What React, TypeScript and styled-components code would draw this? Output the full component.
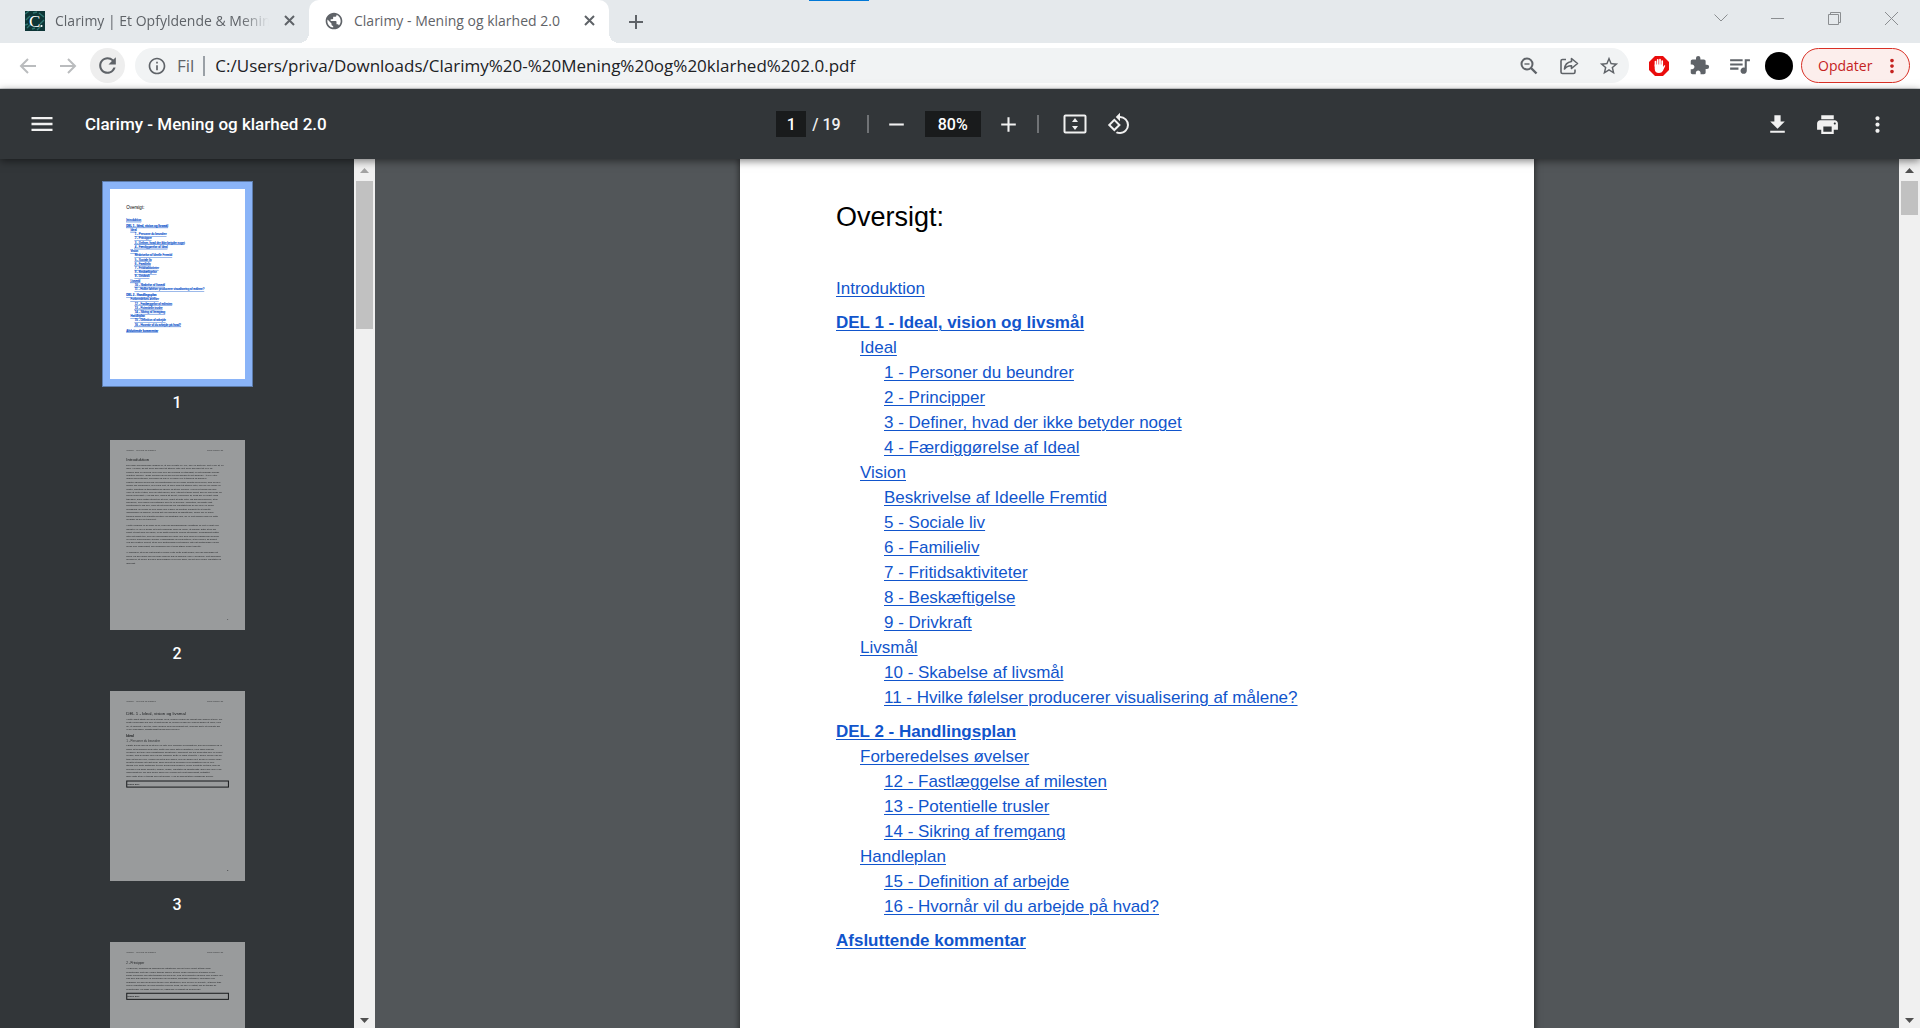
import React from "react";
import styled, { createGlobalStyle, css } from "styled-components";
import {
  MdAdd,
  MdExtension,
  MdMenu,
  MdMoreVert,
  MdOutlineInfo,
  MdPrint,
  MdPublic,
  MdQueueMusic,
  MdRefresh,
  MdRemove,
  MdRotate90DegreesCcw,
  MdStarBorder,
} from "react-icons/md";

const uiFont = `"Segoe UI", "Open Sans", "Noto Sans", sans-serif`;
const viewerFont = `Roboto, "Noto Sans", sans-serif`;
const pageFont = `"Liberation Sans", Arial, sans-serif`;

const GlobalStyle = createGlobalStyle`
  *, *::before, *::after { box-sizing: border-box; }
  body { margin: 0; overflow: hidden; }
  button, input { font: inherit; color: inherit; border: 0; padding: 0; margin: 0; background: none; outline: 0; }
  button { display: inline-flex; align-items: center; justify-content: center; flex: none; }
  svg { display: block; flex: none; }
`;

const Window = styled.div`
  height: 100vh;
  display: flex;
  flex-direction: column;
  font-family: ${uiFont};
  background: #fff;
`;

/* ---------- tab strip ---------- */

const TabStrip = styled.header`
  position: relative;
  display: flex;
  height: 43px;
  flex: none;
  background: #e5e9ec;
  color: #5f6368;
`;

const TaskMarker = styled.i`
  position: absolute;
  top: 0;
  left: 809px;
  width: 60px;
  height: 1px;
  background: #0078d7;
`;

const Tab = styled.div<{ $active?: boolean }>`
  position: relative;
  display: flex;
  align-items: center;
  gap: 10px;
  width: ${(p) => (p.$active ? 300 : 309)}px;
  padding: 0 10px 2px ${(p) => (p.$active ? 15 : 25)}px;
  font-size: 14px;
  line-height: 20px;
  ${(p) =>
    p.$active &&
    css`
      background: #fff;
      border-radius: 10px 10px 0 0;
      &::before,
      &::after {
        content: "";
        position: absolute;
        bottom: 0;
        width: 10px;
        height: 10px;
      }
      &::before {
        right: 100%;
        background: radial-gradient(circle at 0 0, transparent 10px, #fff 10px);
      }
      &::after {
        left: 100%;
        background: radial-gradient(circle at 100% 0, transparent 10px, #fff 10px);
      }
    `}
`;

const TabTitle = styled.span<{ $fade?: boolean }>`
  flex: 1;
  min-width: 0;
  overflow: hidden;
  white-space: nowrap;
  ${(p) =>
    p.$fade &&
    css`
      mask-image: linear-gradient(90deg, #000 calc(100% - 28px), transparent);
    `}
`;

const TabClose = styled.button`
  width: 20px;
  height: 20px;
`;

const NewTab = styled.button`
  width: 34px;
  margin-left: 10px;
`;

const WindowControls = styled.div`
  display: flex;
  margin-left: auto;
  height: 36px;
  color: #8b8e91;
`;

const WindowButton = styled.button`
  width: 57px;
`;

/* ---------- address row ---------- */

const AddressRow = styled.div`
  display: flex;
  align-items: center;
  gap: 10px;
  height: 46px;
  flex: none;
  padding: 0 10px;
  border-bottom: 1px solid #d5d7d9;
  color: #5f6368;
`;

const NavButtons = styled.div`
  display: flex;
  gap: 5px;
`;

const ToolRow = styled.div`
  display: flex;
  align-items: center;
`;

const NavButton = styled.button<{ $round?: boolean; $faded?: boolean }>`
  width: 35px;
  height: 35px;
  border-radius: 50%;
  background: ${(p) => (p.$round ? "#eeeeee" : "transparent")};
  color: ${(p) => (p.$faded ? "#babcbe" : "#5f6368")};
`;

const AddressBar = styled.form`
  display: flex;
  align-items: center;
  flex: 1;
  min-width: 0;
  height: 35px;
  padding: 0 0 0 12px;
  border-radius: 18px;
  background: #f1f3f4;
  font-size: 17px;
`;

const Scheme = styled.span`
  margin-left: 10px;
  padding-right: 9px;
  border-right: 2px solid #9aa0a6;
  line-height: 20px;
`;

const UrlInput = styled.input`
  flex: 1;
  min-width: 0;
  margin-left: 10px;
  color: #202124;
`;

const IconButton = styled.button`
  width: 40px;
  height: 35px;
`;

const Avatar = styled.button`
  width: 28px;
  height: 28px;
  margin: 0 8px 0 6px;
  border-radius: 50%;
  background: #000;
`;

const UpdateButton = styled.button`
  width: 109px;
  height: 35px;
  padding: 0 6px 0 16px;
  justify-content: space-between;
  border: 1px solid #d93025;
  border-radius: 18px;
  background: #fceeec;
  color: #c5221f;
  font-size: 14px;
`;

/* ---------- viewer toolbar ---------- */

const ViewerBar = styled.div`
  position: relative;
  z-index: 1;
  display: grid;
  grid-template-columns: 1fr auto 1fr;
  align-items: center;
  height: 70px;
  flex: none;
  padding: 0 23px 0 22px;
  background: #323639;
  color: #f1f1f1;
  font-family: ${viewerFont};
  font-size: 17px;
  font-weight: 500;
  box-shadow: 0 2px 8px rgba(0, 0, 0, 0.5);
`;

const BarGroup = styled.div<{ $gap: number; $end?: boolean }>`
  display: flex;
  align-items: center;
  gap: ${(p) => p.$gap}px;
  justify-content: ${(p) => (p.$end ? "flex-end" : "flex-start")};
`;

const ViewerButton = styled.button`
  width: 40px;
  height: 40px;
`;

const DocTitle = styled.h1`
  margin: 0;
  font-size: 17px;
  font-weight: 500;
  color: #fff;
`;

const BarInput = styled.input<{ $width: number }>`
  width: ${(p) => p.$width}px;
  height: 26px;
  background: #191b1c;
  color: #fff;
  font-size: 16px;
  text-align: center;
`;

const PageCount = styled.span`
  margin-right: 18px;
  font-size: 16px;
  white-space: pre;
`;

const Separator = styled.i`
  width: 2px;
  height: 18px;
  background: #707376;
`;

const FitTools = styled.div`
  display: flex;
  gap: 4px;
  margin: 0 4px 0 8px;
`;

/* ---------- viewer body ---------- */

const ViewerBody = styled.div`
  display: flex;
  flex: 1;
  min-height: 0;
`;

const Sidebar = styled.aside`
  display: flex;
  flex-direction: column;
  align-items: center;
  width: 354px;
  flex: none;
  padding-top: 30px;
  overflow: hidden;
  background: #323639;
`;

const ThumbItem = styled.button`
  flex-direction: column;
  justify-content: flex-start;
  gap: 11px;
  height: 251px;
  color: #fff;
  font-family: ${viewerFont};
  font-size: 16px;
  font-weight: 500;
  line-height: 26px;
`;

const ThumbPage = styled.div<{ $selected: boolean }>`
  width: 135px;
  height: 190px;
  background: #fff;
  ${(p) =>
    p.$selected
      ? css`
          outline: 1px solid #5d7cab;
          outline-offset: 7px;
          box-shadow: 0 0 0 8px #8ab4f8;
        `
      : css`
          opacity: 0.5;
        `}
`;

const Track = styled.div`
  display: flex;
  flex-direction: column;
  align-items: center;
  width: 21px;
  flex: none;
  background: #f0f0f0;
`;

const TrackArrow = styled.button<{ $down?: boolean; $muted?: boolean }>`
  width: 21px;
  height: ${(p) => (p.$down ? 16 : 22)}px;
  margin-top: ${(p) => (p.$down ? "auto" : 0)};
  color: ${(p) => (p.$muted ? "#a3a3a3" : "#505050")};
`;

const TrackThumb = styled.div<{ $height: number }>`
  width: 17px;
  height: ${(p) => p.$height}px;
  background: #c1c1c1;
`;

const Canvas = styled.main`
  display: flex;
  justify-content: center;
  align-items: flex-start;
  flex: 1;
  min-width: 0;
  overflow: hidden;
  background: #525659;
`;

const Sheet = styled.article`
  width: 794px;
  min-height: 1123px;
  padding: 40px 96px;
  background: #fff;
  font-family: ${pageFont};
  box-shadow: 0 0 6px 1px rgba(0, 0, 0, 0.5);
`;

const SheetTitle = styled.h2`
  margin: 0 0 41px;
  font-size: 27px;
  font-weight: 400;
  line-height: 36px;
  color: #000;
`;

const Contents = styled.nav`
  display: flex;
  flex-direction: column;
  align-items: flex-start;
`;

const Entry = styled.a<{ $level: number; $bold?: boolean }>`
  margin-left: ${(p) => p.$level * 24}px;
  margin-top: ${(p) => (p.$bold ? 9 : 0)}px;
  font-size: 17px;
  font-weight: ${(p) => (p.$bold ? 700 : 400)};
  line-height: 25px;
  color: #1155cc;
  text-decoration: underline;
  text-decoration-thickness: 1px;
  text-underline-offset: 2px;
  white-space: nowrap;
`;

type EntryData = { text: string; level: number; bold?: boolean };

const entries: EntryData[] = [
  { text: "Introduktion", level: 0 },
  { text: "DEL 1 - Ideal, vision og livsmål", level: 0, bold: true },
  { text: "Ideal", level: 1 },
  { text: "1 - Personer du beundrer", level: 2 },
  { text: "2 - Principper", level: 2 },
  { text: "3 - Definer, hvad der ikke betyder noget", level: 2 },
  { text: "4 - Færdiggørelse af Ideal", level: 2 },
  { text: "Vision", level: 1 },
  { text: "Beskrivelse af Ideelle Fremtid", level: 2 },
  { text: "5 - Sociale liv", level: 2 },
  { text: "6 - Familieliv", level: 2 },
  { text: "7 - Fritidsaktiviteter", level: 2 },
  { text: "8 - Beskæftigelse", level: 2 },
  { text: "9 - Drivkraft", level: 2 },
  { text: "Livsmål", level: 1 },
  { text: "10 - Skabelse af livsmål", level: 2 },
  { text: "11 - Hvilke følelser producerer visualisering af målene?", level: 2 },
  { text: "DEL 2 - Handlingsplan", level: 0, bold: true },
  { text: "Forberedelses øvelser", level: 1 },
  { text: "12 - Fastlæggelse af milesten", level: 2 },
  { text: "13 - Potentielle trusler", level: 2 },
  { text: "14 - Sikring af fremgang", level: 2 },
  { text: "Handleplan", level: 1 },
  { text: "15 - Definition af arbejde", level: 2 },
  { text: "16 - Hvornår vil du arbejde på hvad?", level: 2 },
  { text: "Afsluttende kommentar", level: 0, bold: true },
];

/* ---------- page miniatures, drawn in page units (794 x 1123) ---------- */

const Miniature = ({ children }: { children: React.ReactNode }) => (
  <svg width="135" height="190" viewBox="0 0 794 1123" fontFamily={pageFont} fontSize="14" aria-hidden="true">
    {children}
  </svg>
);

const MiniLines = ({ y, lines }: { y: number; lines: string[] }) => (
  <>
    {lines.map((line, i) => (
      <text key={i} x="94" y={y + i * 20}>
        {line}
      </text>
    ))}
  </>
);

const MiniHeader = () => (
  <g fill="#444">
    <text x="94" y="64">Clarimy - Mening og klarhed</text>
    <text x="572" y="64">www.clarimy.dk</text>
  </g>
);

const MiniField = ({ y }: { y: number }) => (
  <>
    <rect x="97" y={y} width="601" height="36" fill="none" stroke="#000" strokeWidth="6" />
    <text x="102" y={y + 24} fontWeight="700">[Skriv her]</text>
  </>
);

const MiniContents = () => {
  let y = 136;
  return (
    <Miniature>
      <text x="94" y="120" fontSize="27">Oversigt:</text>
      <g fill="#1155cc" stroke="#1155cc" strokeWidth="1" fontSize="17" textDecoration="underline">
        {entries.map((e, i) => {
          y += i === 0 ? 52 : e.bold ? 35 : 25;
          return (
            <text key={e.text} x={94 + e.level * 25} y={y} fontWeight={e.bold ? 700 : 400}>
              {e.text}
            </text>
          );
        })}
      </g>
    </Miniature>
  );
};

const MiniIntroduction = () => (
  <Miniature>
    <MiniHeader />
    <text x="94" y="123" fontSize="26">Introduktion</text>
    <MiniLines
      y={153}
      lines={[
        "Den indre menneskelige mission er, at hver eneste er i live, ikke en goft rolle. Det er for at, en",
        "gave i verden, da det giver dig noget at stræbe efter. Det giver dig noget at leve og",
        "fungere som en mening. Men hvor ikke din hverdag er retfærdigt, er det forårsage mange",
        "negative følelser. I søde mening og mål har og kan sælges til det ønskede. At leve efter",
        "andres forventninger, meninger og mål er en sikker vej til tomhed og sjælden.",
        "Positive følelser genereres ved forestillingen om en bedre fremtid og hverves, som du selv",
        "skaber din progressive, hen imod. Det, at have noget at stræbe efter, kan og ville skabe en",
        "positiv, ambitiøs og tilfredsstillende følelse og styrke mening. Hvis hver tilfreds har dine",
        "være at nå til et sted, hvor du intet savner, hvor i stedet at finde noget, som er fornyende og",
        "fokus mennesket i, ved dig selv, planes alt selvet, opfyldelse af, hvad der er meget værd",
        "tilfredsen, sand vigtige stedet for at hver, noget at sigte efter. Og grænserefleksen, at de",
        "følelserne, hvor højere forventninger blive til en selvmin i projektion, så skabte højt",
        "forestillinger til dig selv, uden at betyning dig om resultatet kan du for være en sikker",
        "heldsgang. Du opnår på den måde den fysiske og mentale kapacitet til at udnytte",
        "udfordringer og arbejde, nemlig det vise følelsels og afsluttende, midler der er hjælp",
        "træning derfor til til at sætte sig store og ambitiøse mål, du vil. Det gælder både for dette",
        "program og for livet generelt.",
      ]}
    />
    <MiniLines
      y={511}
      lines={[
        "I dette program vil du finde ud af, hvad din grundlæggende opfattelse af livet er godt eller",
        "dårligt liv er. Du vil skabe dit eget personlige ideal og vision, at forfølge. Efter at du har",
        "klaret et klart ideal og vision, vil du sætte konkrete livsmål at forfølge. Programmet slutter",
        "efter det sidste trin, hvor der planlægges der måle. Der skal laves en handleplan gennem",
        "en række forberedende øvelser. Planmæssige der respekterer, at du opnuer, så sikkert",
        "ved den positive hvilket, at du ikke gentænnager det samme efter. Et gentænnage mener",
        "derfor ikke nødvendigt, men anbefales for et opnå større meget udbytte.",
      ]}
    />
    <MiniLines
      y={670}
      lines={[
        "Vi anbefaler, at du så vidt muligt vil kunne ryste dette forstyrrelser, der kan ødelægge dit",
        "fokus. På den måde kan du bedre forbyde dig og drømme være i øvelserne. Det anbefales",
        "derudover, at kunne øvelsen gennemføres over flere dage, da det giver bedre resultater på",
        "lang sigt.",
      ]}
    />
    <text x="690" y="1064">1</text>
  </Miniature>
);

const MiniPartOne = () => (
  <Miniature>
    <MiniHeader />
    <text x="94" y="141" fontSize="26">DEL 1 - Ideal, vision og livsmål</text>
    <MiniLines
      y={171}
      lines={[
        "I dette afsnit starter du med at finde ud af, hvilken person du inderst inde ønsker at blive. De",
        "fleste mennesker har ikke et klart billede af, hvilken person de virkelig ønsker at være, men",
        "du, et eksplicit. I den tro, som værd for dem og beskæft det, virkende dig til et perfekte dig",
        "vil du virkelighed, fuldstændigt tilfreds med dig selv.",
      ]}
    />
    <text x="94" y="273" fontSize="20" fontWeight="700">Ideal</text>
    <text x="94" y="302" fontSize="18" fill="#333">1 - Personer du beundrer</text>
    <MiniLines
      y={326}
      lines={[
        "Første øvelse går ud på at lave en liste over personer og karakterer, som du beundrer og vil",
        "forme dit personlige ideal efter. Dette kan være fiktive karakterer, men også virkelige",
        "personer. Det kan være forhistoriske kendt som i nærværet. Du har formentlig ikke én enkelt",
        "person, som du finder ideel på alle områder. Dette er også et facit til. I denne øvelse kan du",
        "tage lidt fra den ene, person og lidt af den anden, hvis du ønsker det. Derfor vi senere finde",
        "brugt til at skabe dit eget ideal. Skriv navnet på personen eller karakteren og en eller",
        "stikord eller korte sætninger til hver. Derfor skal beskrive, hvilke kvaliteter og træk, som du",
        "beundrer ved disse karakter, person, image, resultater og karakteristik. Skriv ikke mere end",
        "nødvendigt her. Du skal kunne skrive frie overfor det mest nødvendigt, kortfattet.",
        "Skriv indtil at du er tilfreds med dit arbejde. Hvis du brændt stiller nådigende senere.",
      ]}
    />
    <MiniField y={532} />
    <text x="690" y="1064">2</text>
  </Miniature>
);

const MiniPrinciples = () => (
  <Miniature>
    <MiniHeader />
    <text x="94" y="131" fontSize="18">2 - Principper</text>
    <MiniLines
      y={161}
      lines={[
        "I prøvende, filosofisk og udfordrende situationer kan det være svært at tage gode",
        "beslutninger. Det kan i nogle tilfælde hjælpe at have nogle principper at handle ud fra.",
        "Disse principper kan altid tilpasses og laves om, hvis dit perspektiv udvikles eller ændrer. Du",
        "kan dele dig inspirere af mennesker du beundrer, filosofiske retninger, ideologier eller",
        "spørgsler. Du kan med fordel tænke over situationer, hvor du selv er havnet i, at skulle tage",
        "svære beslutninger. Du kan derefter overveje hvad, du ikke er vigtigt, når du træffer de",
        "beslutninger. Ud disse principper er, passende overskrift og beskrivelse.",
      ]}
    />
    <MiniField y={303} />
  </Miniature>
);

const thumbs = [MiniContents, MiniIntroduction, MiniPartOne, MiniPrinciples];

/* ---------- icons ---------- */

const Favicon = () => (
  <svg width="20" height="20" viewBox="0 0 20 20" aria-hidden="true">
    <rect width="20" height="20" fill="#0d3536" />
    <path d="M0 3l4-3M1 9l4-4M14 2l5 4M2 17l4-4M15 13l4-4M12 19l5-5M8 2l4-1M0 14l3-1M7 18l3-1" stroke="#2f7470" strokeWidth="1.4" />
    <text x="4" y="16" fontFamily="Liberation Serif, serif" fontSize="17" fill="#fff">C</text>
    <circle cx="16.500" cy="15" r="1" fill="#fff" />
  </svg>
);

const CloseGlyph = () => (
  <svg width="11" height="11" viewBox="0 0 11 11" stroke="#5f6368" strokeWidth="2">
    <path d="M1 1l9 9M10 1L1 10" />
  </svg>
);

const ArrowGlyph = ({ flip }: { flip?: boolean }) => (
  <svg width="18" height="18" viewBox="0 0 18 18" fill="none" stroke="currentColor" strokeWidth="2">
    <path d={flip ? "M1 9h15M9 2l7 7-7 7" : "M17 9H2M9 2L2 9l7 7"} />
  </svg>
);

const ZoomOutGlyph = () => (
  <svg width="18" height="18" viewBox="0 0 18 18" fill="none" stroke="#5f6368">
    <circle cx="7" cy="7" r="5.500" strokeWidth="2" />
    <path d="M11 11l5.500 5.500" strokeWidth="2.400" />
    <path d="M4.500 7h5" strokeWidth="1.400" />
  </svg>
);

const ShareGlyph = () => (
  <svg width="20" height="18" viewBox="0 0 20 18" fill="none" stroke="#5f6368" strokeWidth="1.600" strokeLinejoin="round">
    <path d="M7 2.500H3.500Q2 2.500 2 4v11Q2 16.500 3.500 16.500h11Q16 16.500 16 15v-2.500" />
    <path d="M12.500 1.500L18.500 6.500l-6 5V8.700Q8 8.500 5.500 12 6 5.500 12.500 4.500z" />
  </svg>
);

const BlockerGlyph = () => (
  <svg width="22" height="22" viewBox="0 0 22 22">
    <path d="M7 1h8l6 6v8l-6 6H7l-6-6V7z" fill="#ea0c0c" />
    <path d="M7.500 11V6.500M9.700 10V4.800M12 10V4.500M14.200 11V6" stroke="#fff" strokeWidth="1.700" strokeLinecap="round" />
    <path d="M6.700 9.500h8.300v2.500l1.200-1.800q1.200-.3 1 .8L14.800 16Q13.800 18 11 18 6.700 18 6.700 13.500z" fill="#fff" />
  </svg>
);

const DownloadGlyph = () => (
  <svg width="25" height="25" viewBox="0 0 24 24" fill="currentColor">
    <path d="M19 9h-4V3H9v6H5l7 7 7-7zM5 18v2h14v-2H5z" />
  </svg>
);

const FitPageGlyph = () => (
  <svg width="24" height="20" viewBox="0 0 24 20" fill="none" stroke="currentColor">
    <rect x="1.500" y="1.500" width="21" height="17" rx="1" strokeWidth="2" />
    <path d="M12 4l3 4H9zM12 16l3-4H9z" fill="currentColor" stroke="none" />
  </svg>
);

const Triangle = ({ down }: { down?: boolean }) => (
  <svg width="9" height="5" viewBox="0 0 9 5" fill="currentColor">
    <path d={down ? "M0 0h9L4.500 5z" : "M0 5h9L4.500 0z"} />
  </svg>
);

const Scrollbar = ({ thumb, atTop }: { thumb: number; atTop?: boolean }) => (
  <Track>
    <TrackArrow type="button" aria-label="Rul op" $muted={atTop}>
      <Triangle />
    </TrackArrow>
    <TrackThumb $height={thumb} />
    <TrackArrow type="button" aria-label="Rul ned" $down>
      <Triangle down />
    </TrackArrow>
  </Track>
);

export default function App() {
  return (
    <Window>
      <GlobalStyle />
      <TabStrip>
        <TaskMarker />
        <Tab>
          <Favicon />
          <TabTitle $fade>Clarimy | Et Opfyldende &amp; Mening</TabTitle>
          <TabClose type="button" aria-label="Luk fane">
            <CloseGlyph />
          </TabClose>
        </Tab>
        <Tab $active>
          <MdPublic size={20} />
          <TabTitle>Clarimy - Mening og klarhed 2.0</TabTitle>
          <TabClose type="button" aria-label="Luk fane">
            <CloseGlyph />
          </TabClose>
        </Tab>
        <NewTab type="button" aria-label="Ny fane">
          <svg width="14" height="14" viewBox="0 0 14 14" stroke="#5f6368" strokeWidth="2">
            <path d="M7 0v14M0 7h14" />
          </svg>
        </NewTab>
        <WindowControls>
          <WindowButton type="button" aria-label="Søg i faner">
            <svg width="14" height="8" viewBox="0 0 14 8" fill="none" stroke="currentColor">
              <path d="M.5.5L7 7 13.500.5" />
            </svg>
          </WindowButton>
          <WindowButton type="button" aria-label="Minimer">
            <svg width="13" height="1" viewBox="0 0 13 1">
              <rect width="13" height="1" fill="currentColor" />
            </svg>
          </WindowButton>
          <WindowButton type="button" aria-label="Gendan">
            <svg width="13" height="13" viewBox="0 0 13 13" fill="none" stroke="currentColor">
              <path d="M.5 2.500h10v10H.5zM2.500 2.500v-2h10v10h-2" />
            </svg>
          </WindowButton>
          <WindowButton type="button" aria-label="Luk">
            <svg width="13" height="13" viewBox="0 0 13 13" stroke="currentColor">
              <path d="M0 0l13 13M13 0L0 13" />
            </svg>
          </WindowButton>
        </WindowControls>
      </TabStrip>

      <AddressRow>
        <NavButtons>
          <NavButton type="button" aria-label="Tilbage" $faded>
            <ArrowGlyph />
          </NavButton>
          <NavButton type="button" aria-label="Frem" $faded>
            <ArrowGlyph flip />
          </NavButton>
          <NavButton type="button" aria-label="Genindlæs" $round>
            <MdRefresh size={25} />
          </NavButton>
        </NavButtons>
        <AddressBar>
          <MdOutlineInfo size={20} />
          <Scheme>Fil</Scheme>
          <UrlInput
            aria-label="Adresse"
            defaultValue="C:/Users/priva/Downloads/Clarimy%20-%20Mening%20og%20klarhed%202.0.pdf"
          />
          <IconButton type="button" aria-label="Zoom">
            <ZoomOutGlyph />
          </IconButton>
          <IconButton type="button" aria-label="Del">
            <ShareGlyph />
          </IconButton>
          <IconButton type="button" aria-label="Bogmærk">
            <MdStarBorder size={22} />
          </IconButton>
        </AddressBar>
        <ToolRow>
          <IconButton type="button" aria-label="Annonceblokering">
            <BlockerGlyph />
          </IconButton>
          <IconButton type="button" aria-label="Udvidelser">
            <MdExtension size={21} />
          </IconButton>
          <IconButton type="button" aria-label="Medier">
            <MdQueueMusic size={25} />
          </IconButton>
          <Avatar type="button" aria-label="Profil" />
          <UpdateButton type="button">
            Opdater
            <MdMoreVert size={22} />
          </UpdateButton>
        </ToolRow>
      </AddressRow>

      <ViewerBar>
        <BarGroup $gap={23}>
          <ViewerButton type="button" aria-label="Menu">
            <MdMenu size={28} />
          </ViewerButton>
          <DocTitle>Clarimy - Mening og klarhed 2.0</DocTitle>
        </BarGroup>
        <BarGroup $gap={8}>
          <BarGroup $gap={6}>
            <BarInput $width={30} aria-label="Sidetal" defaultValue="1" />
            <PageCount>/ 19</PageCount>
          </BarGroup>
          <Separator />
          <ViewerButton type="button" aria-label="Zoom ud">
            <MdRemove size={25} />
          </ViewerButton>
          <BarInput $width={56} aria-label="Zoomniveau" defaultValue="80%" />
          <ViewerButton type="button" aria-label="Zoom ind">
            <MdAdd size={25} />
          </ViewerButton>
          <Separator />
          <FitTools>
            <ViewerButton type="button" aria-label="Tilpas til side">
              <FitPageGlyph />
            </ViewerButton>
            <ViewerButton type="button" aria-label="Roter mod uret">
              <MdRotate90DegreesCcw size={24} />
            </ViewerButton>
          </FitTools>
        </BarGroup>
        <BarGroup $gap={10} $end>
          <ViewerButton type="button" aria-label="Download">
            <DownloadGlyph />
          </ViewerButton>
          <ViewerButton type="button" aria-label="Udskriv">
            <MdPrint size={25} />
          </ViewerButton>
          <ViewerButton type="button" aria-label="Flere handlinger">
            <MdMoreVert size={25} />
          </ViewerButton>
        </BarGroup>
      </ViewerBar>

      <ViewerBody>
        <Sidebar>
          {thumbs.map((Mini, i) => (
            <ThumbItem type="button" key={i}>
              <ThumbPage $selected={i === 0}>
                <Mini />
              </ThumbPage>
              {i + 1}
            </ThumbItem>
          ))}
        </Sidebar>
        <Scrollbar thumb={148} atTop />
        <Canvas>
          <Sheet>
            <SheetTitle>Oversigt:</SheetTitle>
            <Contents>
              {entries.map((e) => (
                <Entry key={e.text} href="#" $level={e.level} $bold={e.bold}>
                  {e.text}
                </Entry>
              ))}
            </Contents>
          </Sheet>
        </Canvas>
        <Scrollbar thumb={34} />
      </ViewerBody>
    </Window>
  );
}
